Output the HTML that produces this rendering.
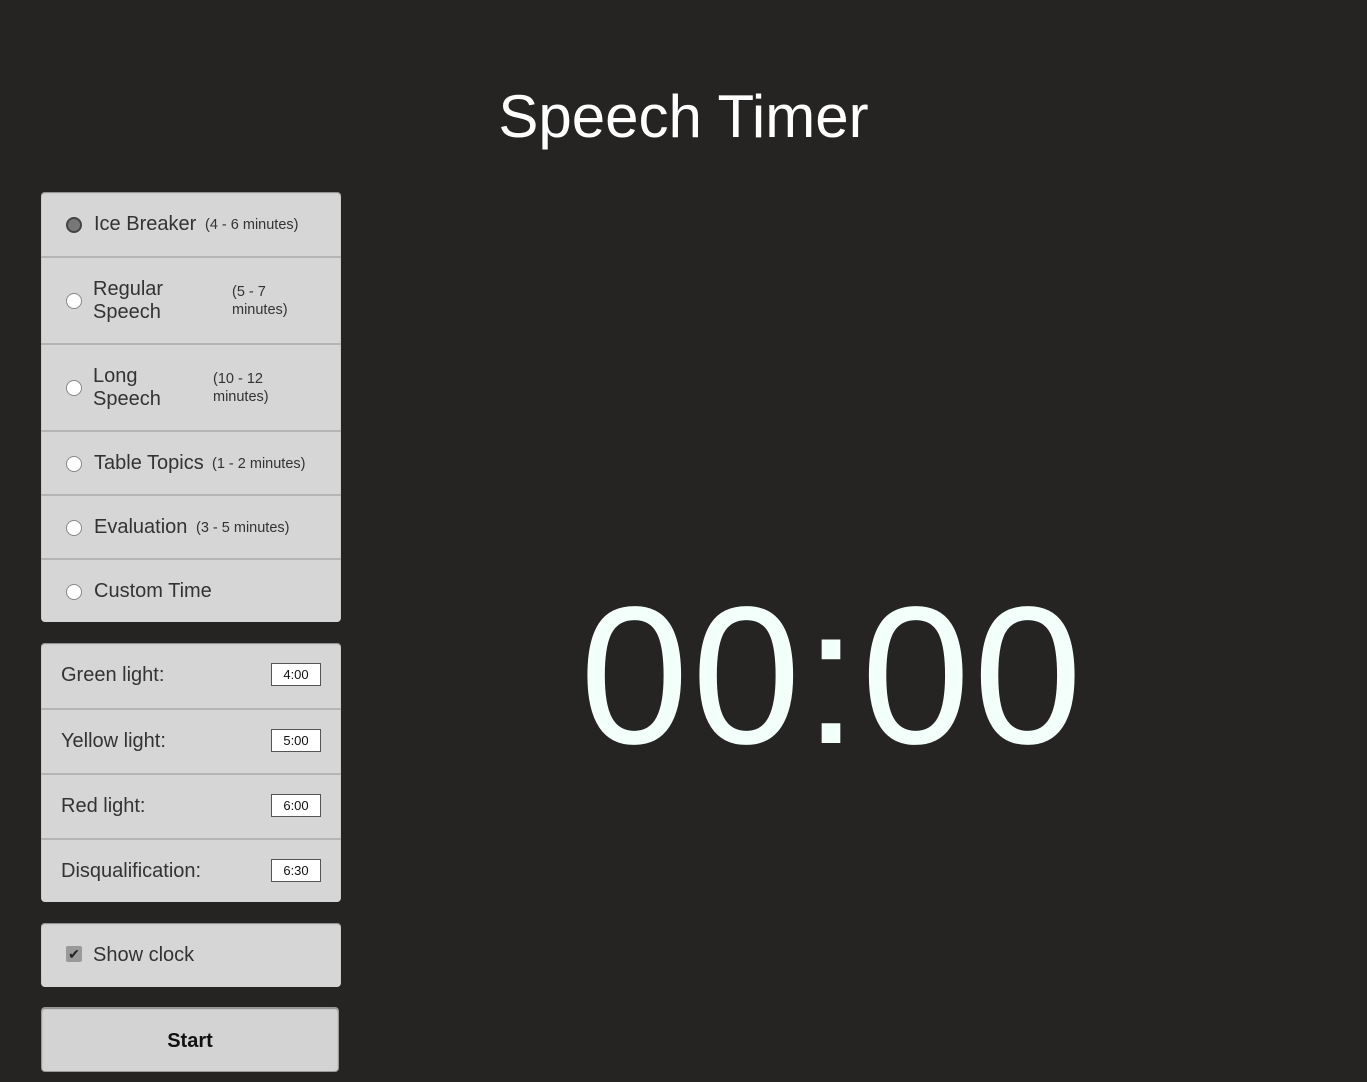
<!DOCTYPE html>
<html><head><meta charset="utf-8"><style>
body{margin:0;width:1367px;height:1082px;background:#252423;font-family:"Liberation Sans",sans-serif;position:relative;overflow:hidden}
.title{position:absolute;left:0;width:1367px;top:81px;text-align:center;color:#fff;font-size:60px;line-height:72px}
.panel{position:absolute;left:41px;width:300px;background:#d6d6d6;border-radius:4px;box-shadow:0 1px 1px #888 inset}
.row{position:absolute;left:0;width:300px;border-top:2px solid #b4b4b4;box-sizing:border-box;color:#333;font-size:20px}
.row.first{border-top:none}
.radio{position:absolute;left:25px;width:14px;height:14px;border-radius:50%;background:#fff;border:1px solid #888}
.lab{position:absolute;left:53px;line-height:23px}
.small{position:absolute;font-size:14.5px;line-height:18px}
.inp{position:absolute;left:230px;width:48px;height:21px;background:#fff;border:1px solid #555;font-size:13px;text-align:center;line-height:21px;color:#111}
.clock{position:absolute;left:560px;top:576px;width:545px;text-align:center;color:#f2fffb;font-size:196px;line-height:200px;letter-spacing:3px}
</style></head><body>
<div class="title">Speech Timer</div>

<div class="panel" style="top:192px;height:430px">
 <div class="row first" style="top:0;height:64px">
  <div class="radio" style="top:25px;background:#777;border:2px solid #444;width:12px;height:12px"></div>
  <div class="lab" style="top:21px">Ice Breaker</div>
  <div class="small" style="left:164px;top:24px">(4 - 6 minutes)</div>
 </div>
 <div class="row" style="top:64px;height:87px">
  <div class="radio" style="top:35px"></div>
  <div class="lab" style="left:52px;top:20px">Regular<br>Speech</div>
  <div class="small" style="left:191px;top:25px">(5 - 7<br>minutes)</div>
 </div>
 <div class="row" style="top:151px;height:87px">
  <div class="radio" style="top:35px"></div>
  <div class="lab" style="left:52px;top:20px">Long<br>Speech</div>
  <div class="small" style="left:172px;top:25px">(10 - 12<br>minutes)</div>
 </div>
 <div class="row" style="top:238px;height:64px">
  <div class="radio" style="top:24px"></div>
  <div class="lab" style="top:20px">Table Topics</div>
  <div class="small" style="left:171px;top:23px">(1 - 2 minutes)</div>
 </div>
 <div class="row" style="top:302px;height:64px">
  <div class="radio" style="top:24px"></div>
  <div class="lab" style="top:20px">Evaluation</div>
  <div class="small" style="left:155px;top:23px">(3 - 5 minutes)</div>
 </div>
 <div class="row" style="top:366px;height:64px">
  <div class="radio" style="top:24px"></div>
  <div class="lab" style="top:20px">Custom Time</div>
 </div>
</div>

<div class="panel" style="top:643px;height:259px">
 <div class="row first" style="top:0;height:65px"><div class="lab" style="left:20px;top:21px">Green light:</div><div class="inp" style="top:20px">4:00</div></div>
 <div class="row" style="top:65px;height:65px"><div class="lab" style="left:20px;top:20px">Yellow light:</div><div class="inp" style="top:19px">5:00</div></div>
 <div class="row" style="top:130px;height:65px"><div class="lab" style="left:20px;top:20px">Red light:</div><div class="inp" style="top:19px">6:00</div></div>
 <div class="row" style="top:195px;height:64px"><div class="lab" style="left:20px;top:20px">Disqualification:</div><div class="inp" style="top:19px">6:30</div></div>
</div>

<div class="panel" style="top:923px;height:64px">
 <div class="row first" style="top:0;height:64px">
  <div style="position:absolute;left:25px;top:23px;width:16px;height:16px;background:#999;border-radius:2px;color:#222;font-size:14px;line-height:16px;text-align:center">✔</div>
  <div class="lab" style="left:52px;top:21px">Show clock</div>
 </div>
</div>

<div class="panel" style="top:1007px;height:65px;width:298px;background:#d3d3d3;border:1px solid #999;box-sizing:border-box;text-align:center;font-weight:bold;font-size:20px;line-height:66px;color:#111">Start</div>

<div class="clock">00:00</div>
</body></html>
